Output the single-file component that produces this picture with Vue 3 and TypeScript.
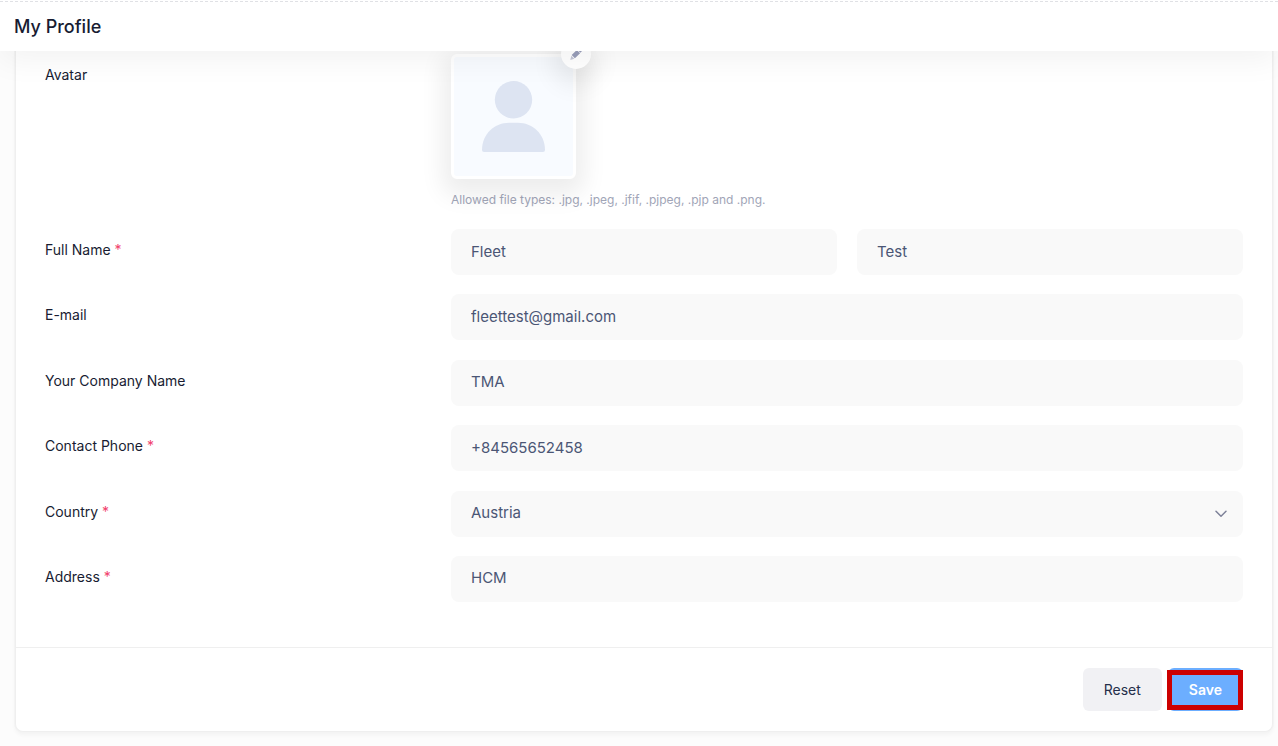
<script setup lang="ts">
import { reactive } from 'vue'

interface Field {
  id: 'email' | 'company' | 'phone' | 'country' | 'address'
  label: string
  type: 'text' | 'email' | 'tel' | 'select'
  required: boolean
}

const initial = {
  firstName: 'Fleet',
  lastName: 'Test',
  email: 'fleettest@gmail.com',
  company: 'TMA',
  phone: '+84565652458',
  country: 'Austria',
  address: 'HCM',
}

const form = reactive({ ...initial })

const fields: Field[] = [
  { id: 'email', label: 'E-mail', type: 'email', required: false },
  { id: 'company', label: 'Your Company Name', type: 'text', required: false },
  { id: 'phone', label: 'Contact Phone', type: 'tel', required: true },
  { id: 'country', label: 'Country', type: 'select', required: true },
  { id: 'address', label: 'Address', type: 'text', required: true },
]

const countries: string[] = ['Austria']

function reset(): void {
  Object.assign(form, initial)
}
</script>

<template>
  <div class="page">
    <header class="toolbar">
      <h1 class="title">My Profile</h1>
    </header>

    <main class="content">
      <form class="card" @submit.prevent @reset.prevent="reset">
        <div class="card-body">
          <div class="row avatar-row">
            <span class="label">Avatar</span>
            <div class="field">
              <div class="avatar">
                <svg class="person" viewBox="0 0 63 72" aria-hidden="true">
                  <circle cx="31.5" cy="18.8" r="18.7" />
                  <path d="M0 69C0 52.500 13 41.700 27 41.700h9c14 0 27 10.800 27 27.300q0 2-2 2H2q-2 0-2-2z" />
                </svg>
                <button type="button" class="edit" aria-label="Change avatar">
                  <svg viewBox="0 0 12 12" aria-hidden="true">
                    <path class="pen" d="M7.300 1.500 9 0l3 3-1.600 1.700zM6.800 1.900 10.100 5.200 4.900 10.300 1.700 7.100z" />
                    <path class="tip" d="M1.300 7.700 4.300 10.700 0.300 12z" />
                  </svg>
                </button>
              </div>
              <p class="hint">Allowed file types: .jpg, .jpeg, .jfif, .pjpeg, .pjp and .png.</p>
            </div>
          </div>

          <div class="rows">
            <div class="row">
              <label class="label" for="firstName">Full Name <span class="star">*</span></label>
              <input id="firstName" v-model="form.firstName" class="control" type="text" />
              <input v-model="form.lastName" class="control" type="text" aria-label="Last name" />
            </div>

            <div v-for="f in fields" :key="f.id" class="row">
              <label class="label" :for="f.id">{{ f.label }} <span v-if="f.required" class="star">*</span></label>
              <div v-if="f.type === 'select'" class="field select-wrap">
                <select :id="f.id" v-model="form[f.id]" class="control">
                  <option v-for="c in countries" :key="c">{{ c }}</option>
                </select>
                <svg class="chevron" viewBox="0 0 12 8" aria-hidden="true">
                  <path d="M1 1.200 6 6.200 11 1.200" />
                </svg>
              </div>
              <input v-else :id="f.id" v-model="form[f.id]" class="control field" :type="f.type" />
            </div>
          </div>
        </div>

        <footer class="card-footer">
          <button type="reset" class="btn reset">Reset</button>
          <div class="save-wrap">
            <button type="submit" class="btn save">Save</button>
            <span class="marker"></span>
          </div>
        </footer>
      </form>
    </main>
  </div>
</template>

<style>
body {
  margin: 0;
  background: #fcfcfc;
}
</style>

<style scoped>
.page {
  box-sizing: border-box;
  min-height: 100vh;
  font-family: Inter, "Liberation Sans", sans-serif;
  color: #181c32;
}

.toolbar {
  position: relative;
  z-index: 2;
  box-sizing: border-box;
  height: 51px;
  padding: 3px 14px 0;
  display: flex;
  align-items: center;
  background: #fff;
  box-shadow: 0 10px 30px rgba(0, 0, 0, 0.05);
}

.toolbar::before {
  content: "";
  position: absolute;
  top: 1px;
  left: 0;
  right: 0;
  height: 1px;
  background: repeating-linear-gradient(90deg, #e0e1e5 0 3px, #fff 3px 5px);
}

.title {
  margin: 0;
  font-size: 18px;
  line-height: 24px;
  font-weight: 500;
  color: #181c32;
}

.content {
  padding: 0 5px 14px 15px;
}

.card {
  background: #fff;
  border: 1px solid #efefef;
  border-top: 0;
  border-radius: 0 0 8px 8px;
  box-shadow: 0 0 0 1px #f4f4f4, 0 3px 4px rgba(0, 0, 0, 0.04);
}

.card-body {
  padding: 3px 29px 45px;
}

.row {
  display: grid;
  grid-template-columns: repeat(3, minmax(0, 1fr));
  column-gap: 20px;
}

.avatar-row {
  margin-bottom: 20px;
}

.rows {
  display: grid;
  align-content: space-between;
  min-height: 373px;
}

.field {
  grid-column: span 2;
}

.label {
  padding-top: 11px;
  font-size: 14px;
  line-height: 20px;
  font-weight: 400;
}

.star {
  color: #f1416c;
}

.avatar {
  position: relative;
  box-sizing: border-box;
  width: 125px;
  height: 125px;
  border: 3px solid #fff;
  border-radius: 6px;
  background: #f8fbff;
  box-shadow: 0 8px 24px 8px rgba(0, 0, 0, 0.075);
  display: flex;
  justify-content: center;
  align-items: flex-start;
}

.person {
  width: 63px;
  height: 72px;
  margin-top: 24px;
  fill: #dde4f2;
}

.edit {
  position: absolute;
  top: -18px;
  right: -18px;
  width: 30px;
  height: 30px;
  padding: 0;
  border: 0;
  border-radius: 50%;
  background: #fff;
  box-shadow: 0 8px 24px 8px rgba(0, 0, 0, 0.075);
  display: grid;
  place-items: center;
}

.edit svg {
  width: 12px;
  height: 12px;
}

.pen {
  fill: #989db9;
}

.tip {
  fill: #c4c6d6;
}

.hint {
  margin: 12px 0 0;
  font-size: 12px;
  line-height: 18px;
  color: #a1a5b7;
}

.control {
  box-sizing: border-box;
  width: 100%;
  height: 46px;
  margin: 0;
  padding: 0 20px 2px;
  border: 0;
  border-radius: 8px;
  background: #f9f9f9;
  font-family: inherit;
  font-size: 15px;
  font-weight: 400;
  color: #4b5675;
  appearance: none;
  outline: 0;
}

.select-wrap {
  display: grid;
  align-items: center;
}

.select-wrap > * {
  grid-area: 1 / 1;
}

.chevron {
  justify-self: end;
  width: 12px;
  height: 8px;
  margin-right: 16px;
  fill: none;
  stroke: #7e8299;
  stroke-width: 1.5;
  stroke-linecap: round;
  stroke-linejoin: round;
  pointer-events: none;
}

.card-footer {
  display: flex;
  justify-content: flex-end;
  gap: 6px;
  padding: 20px 29px;
  border-top: 1px solid #efefef;
}

.btn {
  height: 43px;
  padding: 0 21px;
  border: 0;
  border-radius: 6px;
  font-family: inherit;
  font-size: 14px;
  cursor: pointer;
}

.reset {
  background: #f1f1f4;
  color: #252f4a;
  font-weight: 400;
}

.save-wrap {
  position: relative;
}

.save {
  background: #6caeff;
  color: #fff;
  font-weight: 600;
}

.marker {
  position: absolute;
  inset: 2px 0 1px -1px;
  border: 5px solid #c00;
  pointer-events: none;
}
</style>
